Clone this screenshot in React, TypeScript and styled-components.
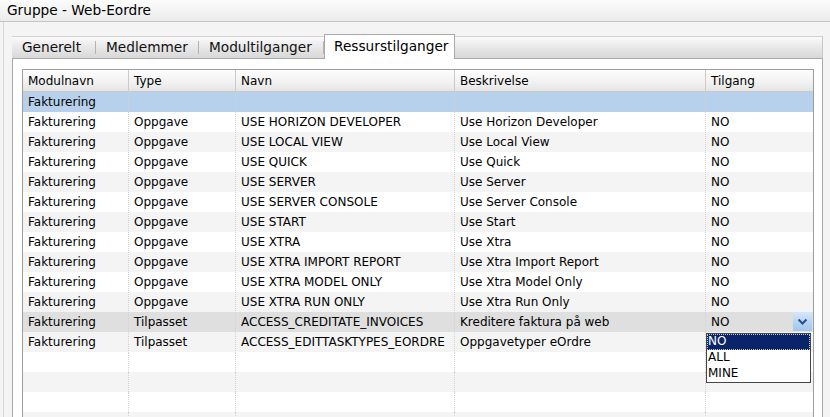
import React from "react";
import styled, { createGlobalStyle } from "styled-components";

type Row = {
	modul: string;
	type: string;
	navn: string;
	beskrivelse: string;
	tilgang: string;
};

const ROWS: Row[] = [
	{ modul: "Fakturering", type: "", navn: "", beskrivelse: "", tilgang: "" },
	{ modul: "Fakturering", type: "Oppgave", navn: "USE HORIZON DEVELOPER", beskrivelse: "Use Horizon Developer", tilgang: "NO" },
	{ modul: "Fakturering", type: "Oppgave", navn: "USE LOCAL VIEW", beskrivelse: "Use Local View", tilgang: "NO" },
	{ modul: "Fakturering", type: "Oppgave", navn: "USE QUICK", beskrivelse: "Use Quick", tilgang: "NO" },
	{ modul: "Fakturering", type: "Oppgave", navn: "USE SERVER", beskrivelse: "Use Server", tilgang: "NO" },
	{ modul: "Fakturering", type: "Oppgave", navn: "USE SERVER CONSOLE", beskrivelse: "Use Server Console", tilgang: "NO" },
	{ modul: "Fakturering", type: "Oppgave", navn: "USE START", beskrivelse: "Use Start", tilgang: "NO" },
	{ modul: "Fakturering", type: "Oppgave", navn: "USE XTRA", beskrivelse: "Use Xtra", tilgang: "NO" },
	{ modul: "Fakturering", type: "Oppgave", navn: "USE XTRA IMPORT REPORT", beskrivelse: "Use Xtra Import Report", tilgang: "NO" },
	{ modul: "Fakturering", type: "Oppgave", navn: "USE XTRA MODEL ONLY", beskrivelse: "Use Xtra Model Only", tilgang: "NO" },
	{ modul: "Fakturering", type: "Oppgave", navn: "USE XTRA RUN ONLY", beskrivelse: "Use Xtra Run Only", tilgang: "NO" },
	{ modul: "Fakturering", type: "Tilpasset", navn: "ACCESS_CREDITATE_INVOICES", beskrivelse: "Kreditere faktura på web", tilgang: "NO" },
	{ modul: "Fakturering", type: "Tilpasset", navn: "ACCESS_EDITTASKTYPES_EORDRE", beskrivelse: "Oppgavetyper eOrdre", tilgang: "" },
];

const EMPTY_ROWS = 5;
const EDIT_ROW = 11;
// tab widths as measured on the strip
const TABS = [
	{ label: "Generelt", width: 84 },
	{ label: "Medlemmer", width: 103 },
	{ label: "Modultilganger", width: 125 },
	{ label: "Ressurstilganger", width: 131 },
];
const COLUMNS = ["Modulnavn", "Type", "Navn", "Beskrivelse", "Tilgang"];
const OPTIONS = ["NO", "ALL", "MINE"];

const GlobalStyle = createGlobalStyle`
	html, body {
		margin: 0;
		padding: 0;
	}

	body {
		background: #f4f4f4;
		font-family: "DejaVu Sans", Verdana, sans-serif;
		color: #000;
	}
`;

const Window = styled.div`
	display: flex;
	flex-direction: column;
	width: 830px;
	height: 417px;
	overflow: hidden;
	background: #f4f4f4;
`;

const TitleBar = styled.div`
	flex: none;
	box-sizing: border-box;
	height: 22px;
	padding-left: 7px;
	border-bottom: 1px solid #c4c4c4;
	background: linear-gradient(#fcfcfc, #ebebeb);
	font-size: 13.7px;
	line-height: 21px;
`;

const Frame = styled.div`
	display: flex;
	flex: 1;
	flex-direction: column;
	min-height: 0;
	margin-left: 3px;
	padding: 12px 7px 0 8px;
	border-left: 1px solid #d6d6d6;
`;

const TabStrip = styled.div`
	display: flex;
	flex: none;
	align-items: flex-end;
	box-sizing: border-box;
	height: 22px;
	margin-top: 2px;
	border-top: 1px solid #d2d2d2;
	border-right: 1px solid #c8c8c8;
	background: linear-gradient(#fafafa, #e6e6e6 55%, #d8d8d8);
`;

const Tab = styled.div<{ $active?: boolean; $width: number }>`
	position: relative;
	flex: none;
	box-sizing: border-box;
	width: ${(p) => p.$width}px;
	font-size: 13.7px;
	white-space: nowrap;

	${(p) =>
		p.$active
			? `
		align-self: flex-end;
		height: 25px;
		margin-bottom: -1px;
		padding-left: 9px;
		border: 1px solid #a9a9a9;
		border-bottom: none;
		background: #fff;
		line-height: 22px;
		z-index: 1;
	`
			: `
		height: 21px;
		padding-left: 10px;
		line-height: 20px;
		color: #111;

		&:after {
			position: absolute;
			top: 4px;
			right: 0;
			width: 1px;
			height: 13px;
			background: #b4b4b4;
			content: "";
		}
	`}
`;

const Panel = styled.div`
	flex: 1;
	min-height: 0;
	padding: 10px 8px 0 9px;
	border: 1px solid #a9a9a9;
	border-bottom: none;
	background: #fff;
`;

const Grid = styled.div`
	box-sizing: border-box;
	width: 792px;
	height: 400px;
	border: 1px solid #9d9d9d;
	font-size: 12px;
`;

const TEMPLATE = "105px 107px 219px 251px 108px";

const HeaderRow = styled.div`
	display: grid;
	grid-template-columns: ${TEMPLATE};
	box-sizing: border-box;
	height: 22px;
	border-bottom: 1px solid #c9c9c9;
	background: linear-gradient(#fdfdfd, #f1f1f1 60%, #e4e4e4);
`;

const HeaderCell = styled.div<{ $first?: boolean }>`
	padding-left: 5px;
	border-left: ${(p) => (p.$first ? "none" : "1px solid #cbcbcb")};
	line-height: 22px;
	white-space: nowrap;
`;

type Tone = "blue" | "gray" | "white" | "selected";

const DataRow = styled.div<{ $tone: Tone }>`
	display: grid;
	grid-template-columns: ${TEMPLATE};
	height: 20px;
	background: ${(p) =>
		({
			blue: "#b7d1ec",
			gray: "#f4f4f4",
			white: "#ffffff",
			selected: "#dfdfdf",
		})[p.$tone]};
`;

const Cell = styled.div<{ $first?: boolean }>`
	position: relative;
	padding-left: 5px;
	border-left: ${(p) => (p.$first ? "none" : "1px dotted #d2d2d2")};
	line-height: 21px;
	white-space: nowrap;
`;

const DropButton = styled.div`
	position: absolute;
	top: 0;
	right: 1px;
	display: flex;
	align-items: center;
	justify-content: center;
	width: 19px;
	height: 19px;
	background: linear-gradient(#d6e7fa, #b3d2f4 60%, #a3c6ef);
`;

const DropList = styled.div`
	position: absolute;
	top: 21px;
	left: 0;
	z-index: 2;
	box-sizing: border-box;
	width: 105px;
	border: 1px solid #454545;
	background: #fff;
`;

const Option = styled.div<{ $selected?: boolean }>`
	box-sizing: border-box;
	height: 16px;
	padding-left: 1px;
	line-height: 15px;
	color: ${(p) => (p.$selected ? "#fff" : "#000")};
	background: ${(p) => (p.$selected ? "#0a246a" : "transparent")};
	outline: ${(p) => (p.$selected ? "1px dotted #c8c8c8" : "none")};
	outline-offset: -1px;
`;

const Chevron = () => (
	<svg width="11" height="8" viewBox="0 0 11 8">
		<path d="M1.5 1.5 L5.5 5.5 L9.5 1.5" fill="none" stroke="#2b4f8c" strokeWidth="2" />
	</svg>
);

const toneFor = (i: number): Tone => {
	if (i === 0) return "blue";
	if (i === EDIT_ROW) return "selected";
	return i % 2 === 0 ? "gray" : "white";
};

export default function App() {
	const rows: Row[] = [
		...ROWS,
		...Array.from({ length: EMPTY_ROWS }, () => ({
			modul: "",
			type: "",
			navn: "",
			beskrivelse: "",
			tilgang: "",
		})),
	];

	return (
		<>
			<GlobalStyle />
			<Window>
				<TitleBar>Gruppe - Web-Eordre</TitleBar>
				<Frame>
					<TabStrip>
						{TABS.map((t, i) => (
							<Tab key={t.label} $width={t.width} $active={i === TABS.length - 1}>
								{t.label}
							</Tab>
						))}
					</TabStrip>
					<Panel>
						<Grid>
							<HeaderRow>
								{COLUMNS.map((c, i) => (
									<HeaderCell key={c} $first={i === 0}>
										{c}
									</HeaderCell>
								))}
							</HeaderRow>
							{rows.map((r, i) => (
								<DataRow key={i} $tone={toneFor(i)}>
									<Cell $first>{r.modul}</Cell>
									<Cell>{r.type}</Cell>
									<Cell>{r.navn}</Cell>
									<Cell>{r.beskrivelse}</Cell>
									<Cell>
										{r.tilgang}
										{i === EDIT_ROW && (
											<>
												<DropButton>
													<Chevron />
												</DropButton>
												<DropList>
													{OPTIONS.map((o, j) => (
														<Option key={o} $selected={j === 0}>
															{o}
														</Option>
													))}
												</DropList>
											</>
										)}
									</Cell>
								</DataRow>
							))}
						</Grid>
					</Panel>
				</Frame>
			</Window>
		</>
	);
}
